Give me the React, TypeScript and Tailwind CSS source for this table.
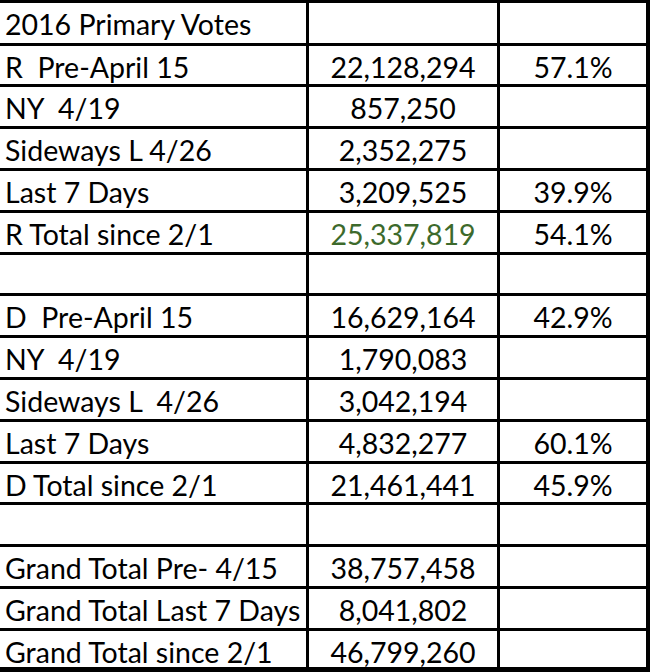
const ROWS: { label: string; value: string; pct: string; green?: boolean }[] = [
  { label: "2016 Primary Votes", value: "", pct: "" },
  { label: "R  Pre-April 15", value: "22,128,294", pct: "57.1%" },
  { label: "NY  4/19", value: "857,250", pct: "" },
  { label: "Sideways L 4/26", value: "2,352,275", pct: "" },
  { label: "Last 7 Days", value: "3,209,525", pct: "39.9%" },
  { label: "R Total since 2/1", value: "25,337,819", pct: "54.1%", green: true },
  { label: "", value: "", pct: "" },
  { label: "D  Pre-April 15", value: "16,629,164", pct: "42.9%" },
  { label: "NY  4/19", value: "1,790,083", pct: "" },
  { label: "Sideways L  4/26", value: "3,042,194", pct: "" },
  { label: "Last 7 Days", value: "4,832,277", pct: "60.1%" },
  { label: "D Total since 2/1", value: "21,461,441", pct: "45.9%" },
  { label: "", value: "", pct: "" },
  { label: "Grand Total Pre- 4/15", value: "38,757,458", pct: "" },
  { label: "Grand Total Last 7 Days", value: "8,041,802", pct: "" },
  { label: "Grand Total since 2/1", value: "46,799,260", pct: "" },
];

export default function App() {
  return (
    <div className="w-[650px] h-[672px] overflow-hidden bg-white text-black text-[28.5px] font-['Lato',sans-serif]">
      <div className="border-t-[3px] border-black">
        {ROWS.map((r, i) => {
          const h =
            i === 0
              ? "h-[42.7px] border-b-[3px]"
              : i === ROWS.length - 1
              ? "h-[41.1px] border-b-[5px]"
              : "h-[41.8px] border-b-[3px]";
          return (
            <div key={i} className={`grid grid-cols-[309px_191px_150px] border-black whitespace-pre ${h}`}>
              <div className="flex items-end pl-[5px] pb-[1px] border-r-[3px] border-black">{r.label}</div>
              <div className={`flex items-end justify-center pb-[1px] border-r-[3px] border-black ${r.green ? "text-[#3d6a2c]" : ""}`}>
                {r.value}
              </div>
              <div className="flex items-end justify-center pb-[1px] border-r-[4px] border-black">{r.pct}</div>
            </div>
          );
        })}
      </div>
    </div>
  );
}
